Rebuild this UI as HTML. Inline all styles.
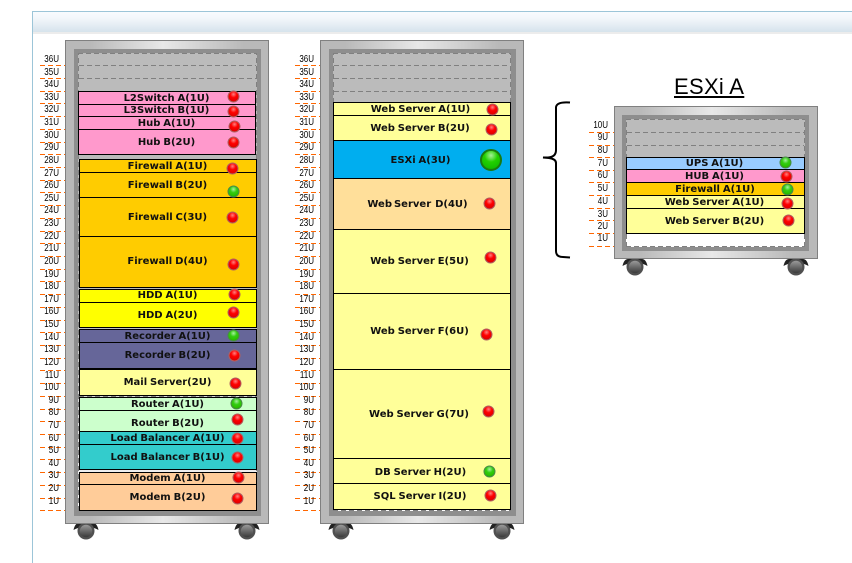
<!DOCTYPE html>
<html><head><meta charset="utf-8"><style>
html,body{margin:0;padding:0;background:#fff;width:852px;height:563px;overflow:hidden}
div,span{position:absolute;box-sizing:border-box}
#h{left:32px;top:11px;width:820px;height:21px;border-top:1px solid #9cc5d8;background:linear-gradient(#f8fbfe,#f3f7fb 30%,#d6e3ec)}
#hl{left:33px;top:32px;width:819px;height:2px;background:#ececec}
#v{left:32px;top:11px;width:1px;height:552px;background:#9cc5d8}
.rk{border:1px solid #808080;background:linear-gradient(90deg,#b9b9b9,#b9b9b9 12%,#e8e8e8 48%,#b9b9b9 88%,#b9b9b9)}
.in{background:#8e8e8e}
.ds{background:
repeating-linear-gradient(90deg,#808080 0 5px,transparent 5px 8px) 0 0/100% 1px no-repeat,
repeating-linear-gradient(90deg,#808080 0 5px,transparent 5px 8px) 0 100%/100% 1px no-repeat,
repeating-linear-gradient(0deg,#808080 0 5px,transparent 5px 8px) 0 0/1px 100% no-repeat,
repeating-linear-gradient(0deg,#808080 0 5px,transparent 5px 8px) 100% 0/1px 100% no-repeat,
linear-gradient(#bbb,#bbb 55%,#e8e8e8 88%,#fff)}
.s3{background:
repeating-linear-gradient(90deg,#808080 0 5px,transparent 5px 8px) 0 0/100% 1px no-repeat,
repeating-linear-gradient(90deg,#808080 0 5px,transparent 5px 8px) 0 100%/100% 1px no-repeat,
repeating-linear-gradient(0deg,#808080 0 5px,transparent 5px 8px) 0 0/1px 100% no-repeat,
repeating-linear-gradient(0deg,#808080 0 5px,transparent 5px 8px) 100% 0/1px 100% no-repeat,
linear-gradient(#bbb,#bbb 30%,#c4c4c4 65%,#fff 85%)}
.g{height:1px;background:repeating-linear-gradient(90deg,#808080 0 5px,transparent 5px 8px)}
.t{height:1px;width:25px;left:40px;background:repeating-linear-gradient(90deg,#f60 0 5px,transparent 5px 8px)}
.l{left:38px;width:21px;height:12px;margin-top:1px;font:10px/12px "Liberation Sans",sans-serif;color:#000;text-align:right;transform:scaleX(.8);transform-origin:100% 50%}
.b{border:1px solid #000}
.x{margin-top:2px;font:bold 10px/20px "DejaVu Sans",sans-serif;color:#111;text-align:center;white-space:pre;word-spacing:-.6px;height:12px}
.d{width:12px;height:12px;border-radius:50%;transform:translate(-.5px,-.5px)}
.r{background:radial-gradient(circle at 50% 28%,#ff8080 0,#f00 38%,#e60000 70%,#b00 100%);border:1px solid #b06060}
.n{background:radial-gradient(circle at 50% 28%,#a6f0a0 0,#33cc11 38%,#2bc000 70%,#1a8a00 100%);border:1px solid #4a8a4a}
.p{background:#f9c}.f{background:#fc0}.y{background:#ff0}.m{background:#669}.w{background:#ff9}.o{background:#cfc}.c{background:#3cc}.q{background:#fc9}
</style></head><body>
<div id="h"></div><div id="hl"></div><div id="v"></div>

<!-- wheels -->
<svg style="position:absolute;left:0;top:0" width="852" height="563">
<defs><linearGradient id="wg" x1="0" y1="0" x2="0" y2="1"><stop offset="0" stop-color="#9a9a9a"/><stop offset="1" stop-color="#3a3a3a"/></linearGradient>
<g id="wh"><path d="M-12.500 -1 Q-11 -8 -7 -8 L7 -8 Q11 -8 12.500 -1 Q8 -4 0 -4 Q-8 -4 -12.500 -1Z" fill="#222"/><circle r="8.500" fill="#505050"/><circle r="6.200" fill="url(#wg)"/></g></defs>
<use href="#wh" x="86" y="531"/><use href="#wh" x="247" y="531"/>
<use href="#wh" x="341" y="531"/><use href="#wh" x="502" y="531"/>
<use href="#wh" x="635" y="267"/><use href="#wh" x="796" y="267"/>
<path d="M570 102.500 Q557 101.500 556 107 L556 150 Q556 157 548 157.500 L543 157.500 L549 158 Q556 159 556 163 L556 251 Q556 257 563 257 L570 257.500" fill="none" stroke="#000" stroke-width="2"/>
</svg>

<!-- rack 1 -->
<div class="rk" style="left:65px;top:40px;width:204px;height:484px"></div>
<div class="in" style="left:74px;top:49px;width:187px;height:467px"></div>
<div class="ds" style="left:78px;top:53px;width:179px;height:458px"></div>
<div class="g" style="left:79px;top:65px;width:177px"></div><div class="g" style="left:79px;top:78px;width:177px"></div><div class="g" style="left:79px;top:396px;width:177px"></div>
<div class="b p" style="left:78px;top:91px;width:178px;height:14px"></div>
<div class="b p" style="left:78px;top:104px;width:178px;height:13px"></div>
<div class="b p" style="left:78px;top:116px;width:178px;height:14px"></div>
<div class="b p" style="left:78px;top:129px;width:178px;height:26px"></div>
<div class="b f" style="left:79px;top:159px;width:178px;height:14px"></div>
<div class="b f" style="left:79px;top:172px;width:178px;height:26px"></div>
<div class="b f" style="left:79px;top:197px;width:178px;height:40px"></div>
<div class="b f" style="left:79px;top:236px;width:178px;height:52px"></div>
<div class="b y" style="left:79px;top:289px;width:178px;height:14px"></div>
<div class="b y" style="left:79px;top:302px;width:178px;height:26px"></div>
<div class="b m" style="left:79px;top:329px;width:178px;height:14px"></div>
<div class="b m" style="left:79px;top:342px;width:178px;height:27px"></div>
<div class="b w" style="left:79px;top:369px;width:178px;height:27px"></div>
<div class="b o" style="left:79px;top:397px;width:178px;height:14px"></div>
<div class="b o" style="left:79px;top:410px;width:178px;height:22px"></div>
<div class="b c" style="left:79px;top:431px;width:178px;height:14px"></div>
<div class="b c" style="left:79px;top:444px;width:178px;height:26px"></div>
<div class="b q" style="left:79px;top:472px;width:178px;height:13px"></div>
<div class="b q" style="left:79px;top:484px;width:178px;height:27px"></div>

<div class="x" style="left:78px;width:177px;top:87px">L2Switch A(1U)</div>
<div class="x" style="left:78px;width:177px;top:99px">L3Switch B(1U)</div>
<div class="x" style="left:78px;width:177px;top:112px">Hub A(1U)</div>
<div class="x" style="left:78px;width:177px;top:131px">Hub B(2U)</div>
<div class="x" style="left:79px;width:177px;top:155px">Firewall A(1U)</div>
<div class="x" style="left:79px;width:177px;top:174px">Firewall B(2U)</div>
<div class="x" style="left:79px;width:177px;top:206px">Firewall C(3U)</div>
<div class="x" style="left:79px;width:177px;top:250px">Firewall D(4U)</div>
<div class="x" style="left:79px;width:177px;top:284px">HDD A(1U)</div>
<div class="x" style="left:79px;width:177px;top:304px">HDD A(2U)</div>
<div class="x" style="left:79px;width:177px;top:325px">Recorder A(1U)</div>
<div class="x" style="left:79px;width:177px;top:344px">Recorder B(2U)</div>
<div class="x" style="left:79px;width:177px;top:371px">Mail Server(2U)</div>
<div class="x" style="left:79px;width:177px;top:393px">Router A(1U)</div>
<div class="x" style="left:79px;width:177px;top:412px">Router B(2U)</div>
<div class="x" style="left:79px;width:177px;top:427px">Load Balancer A(1U)</div>
<div class="x" style="left:79px;width:177px;top:446px">Load Balancer B(1U)</div>
<div class="x" style="left:79px;width:177px;top:467px">Modem A(1U)</div>
<div class="x" style="left:79px;width:177px;top:486px">Modem B(2U)</div>

<div class="d r" style="left:228px;top:91px"></div>
<div class="d r" style="left:228px;top:106px"></div>
<div class="d r" style="left:229px;top:121px"></div>
<div class="d r" style="left:228px;top:137px"></div>
<div class="d r" style="left:227px;top:163px"></div>
<div class="d n" style="left:228px;top:186px"></div>
<div class="d r" style="left:227px;top:212px"></div>
<div class="d r" style="left:228px;top:259px"></div>
<div class="d r" style="left:229px;top:289px"></div>
<div class="d r" style="left:228px;top:307px"></div>
<div class="d n" style="left:228px;top:330px"></div>
<div class="d r" style="left:229px;top:350px"></div>
<div class="d r" style="left:230px;top:378px"></div>
<div class="d n" style="left:231px;top:398px"></div>
<div class="d r" style="left:232px;top:414px"></div>
<div class="d r" style="left:232px;top:433px"></div>
<div class="d r" style="left:232px;top:452px"></div>
<div class="d r" style="left:233px;top:472px"></div>
<div class="d r" style="left:232px;top:493px"></div>

<!-- rack 2 -->
<div class="rk" style="left:320px;top:40px;width:204px;height:484px"></div>
<div class="in" style="left:329px;top:49px;width:187px;height:467px"></div>
<div class="ds" style="left:333px;top:53px;width:178px;height:458px"></div>
<div class="g" style="left:334px;top:65px;width:176px"></div><div class="g" style="left:334px;top:78px;width:176px"></div><div class="g" style="left:334px;top:91px;width:176px"></div>
<div class="b w" style="left:333px;top:102px;width:178px;height:14px"></div>
<div class="b w" style="left:333px;top:115px;width:178px;height:26px"></div>
<div class="b" style="left:333px;top:140px;width:178px;height:39px;background:#00aeef"></div>
<div class="b" style="left:333px;top:178px;width:178px;height:52px;background:#ffdf9a"></div>
<div class="b w" style="left:333px;top:229px;width:178px;height:65px"></div>
<div class="b w" style="left:333px;top:293px;width:178px;height:77px"></div>
<div class="b w" style="left:333px;top:369px;width:178px;height:90px"></div>
<div class="b w" style="left:333px;top:458px;width:178px;height:26px"></div>
<div class="b w" style="left:333px;top:483px;width:178px;height:27px"></div>

<div class="x" style="left:333px;width:175px;top:98px">Web Server A(1U)</div>
<div class="x" style="left:333px;width:174px;top:117px">Web Server B(2U)</div>
<div class="x" style="left:333px;width:175px;top:149px">ESXi A(3U)</div>
<div class="x" style="left:333px;width:169px;top:193px;word-spacing:-1.5px">Web Server  D(4U)</div>
<div class="x" style="left:333px;width:173px;top:250px">Web Server E(5U)</div>
<div class="x" style="left:333px;width:173px;top:320px">Web Server F(6U)</div>
<div class="x" style="left:333px;width:172px;top:403px">Web Server G(7U)</div>
<div class="x" style="left:333px;width:175px;top:461px">DB Server H(2U)</div>
<div class="x" style="left:333px;width:174px;top:485px">SQL Server I(2U)</div>

<div class="d r" style="left:487px;top:104px"></div>
<div class="d r" style="left:486px;top:124px"></div>
<div class="d n" style="left:480px;top:149px;width:22px;height:22px;border:2px solid #1a7a10;transform:none;background:radial-gradient(circle at 50% 25%,#a8f098 0,#22d000 40%,#14c000 75%,#109000 100%)"></div>
<div class="d r" style="left:484px;top:198px"></div>
<div class="d r" style="left:485px;top:252px"></div>
<div class="d r" style="left:481px;top:329px"></div>
<div class="d r" style="left:483px;top:406px"></div>
<div class="d n" style="left:484px;top:466px"></div>
<div class="d r" style="left:485px;top:490px"></div>

<!-- rack 3 -->
<div style="left:674px;top:74px;width:74px;font:22px/25px 'Liberation Sans',sans-serif;letter-spacing:.3px;color:#000;text-decoration:underline;white-space:pre">ESXi A</div>
<div class="rk" style="left:614px;top:106px;width:204px;height:153px"></div>
<div class="in" style="left:622px;top:115px;width:187px;height:136px"></div>
<div class="s3" style="left:626px;top:119px;width:179px;height:128px"></div>
<div class="g" style="left:627px;top:132px;width:177px"></div><div class="g" style="left:627px;top:145px;width:177px"></div>
<div class="b" style="left:626px;top:157px;width:179px;height:13px;background:#9cf"></div>
<div class="b p" style="left:626px;top:169px;width:179px;height:14px"></div>
<div class="b f" style="left:626px;top:182px;width:179px;height:14px"></div>
<div class="b w" style="left:626px;top:195px;width:179px;height:14px"></div>
<div class="b w" style="left:626px;top:208px;width:179px;height:26px"></div>
<div class="x" style="left:626px;width:177px;top:152px">UPS A(1U)</div>
<div class="x" style="left:626px;width:177px;top:165px">HUB A(1U)</div>
<div class="x" style="left:626px;width:178px;top:178px">Firewall A(1U)</div>
<div class="x" style="left:626px;width:177px;top:191px">Web Server A(1U)</div>
<div class="x" style="left:626px;width:177px;top:210px">Web Server B(2U)</div>
<div class="d n" style="left:780px;top:157px"></div>
<div class="d r" style="left:781px;top:171px"></div>
<div class="d n" style="left:782px;top:184px"></div>
<div class="d r" style="left:782px;top:198px"></div>
<div class="d r" style="left:783px;top:215px"></div>

<!-- ruler 1 -->
<div class="t" style="top:65px"></div><div class="t" style="top:78px"></div><div class="t" style="top:91px"></div><div class="t" style="top:103px"></div><div class="t" style="top:116px"></div><div class="t" style="top:129px"></div><div class="t" style="top:142px"></div><div class="t" style="top:154px"></div><div class="t" style="top:167px"></div><div class="t" style="top:180px"></div><div class="t" style="top:192px"></div><div class="t" style="top:205px"></div><div class="t" style="top:218px"></div><div class="t" style="top:231px"></div><div class="t" style="top:243px"></div><div class="t" style="top:256px"></div><div class="t" style="top:269px"></div><div class="t" style="top:281px"></div><div class="t" style="top:294px"></div><div class="t" style="top:307px"></div><div class="t" style="top:320px"></div><div class="t" style="top:332px"></div><div class="t" style="top:345px"></div><div class="t" style="top:358px"></div><div class="t" style="top:370px"></div><div class="t" style="top:383px"></div><div class="t" style="top:396px"></div><div class="t" style="top:409px"></div><div class="t" style="top:421px"></div><div class="t" style="top:434px"></div><div class="t" style="top:447px"></div><div class="t" style="top:459px"></div><div class="t" style="top:472px"></div><div class="t" style="top:485px"></div><div class="t" style="top:498px"></div><div class="t" style="top:510px"></div>
<div class="l" style="top:53px">36U</div><div class="l" style="top:66px">35U</div><div class="l" style="top:78px">34U</div><div class="l" style="top:91px">33U</div><div class="l" style="top:103px">32U</div><div class="l" style="top:116px">31U</div><div class="l" style="top:129px">30U</div><div class="l" style="top:141px">29U</div><div class="l" style="top:154px">28U</div><div class="l" style="top:167px">27U</div><div class="l" style="top:179px">26U</div><div class="l" style="top:192px">25U</div><div class="l" style="top:204px">24U</div><div class="l" style="top:217px">23U</div><div class="l" style="top:230px">22U</div><div class="l" style="top:242px">21U</div><div class="l" style="top:255px">20U</div><div class="l" style="top:268px">19U</div><div class="l" style="top:280px">18U</div><div class="l" style="top:293px">17U</div><div class="l" style="top:305px">16U</div><div class="l" style="top:318px">15U</div><div class="l" style="top:331px">14U</div><div class="l" style="top:343px">13U</div><div class="l" style="top:356px">12U</div><div class="l" style="top:369px">11U</div><div class="l" style="top:381px">10U</div><div class="l" style="top:394px">9U</div><div class="l" style="top:406px">8U</div><div class="l" style="top:419px">7U</div><div class="l" style="top:432px">6U</div><div class="l" style="top:444px">5U</div><div class="l" style="top:457px">4U</div><div class="l" style="top:469px">3U</div><div class="l" style="top:482px">2U</div><div class="l" style="top:495px">1U</div>

<!-- ruler 2 -->
<div style="left:255px;top:0;width:0;height:0">
<div class="t" style="top:65px"></div><div class="t" style="top:78px"></div><div class="t" style="top:91px"></div><div class="t" style="top:103px"></div><div class="t" style="top:116px"></div><div class="t" style="top:129px"></div><div class="t" style="top:142px"></div><div class="t" style="top:154px"></div><div class="t" style="top:167px"></div><div class="t" style="top:180px"></div><div class="t" style="top:192px"></div><div class="t" style="top:205px"></div><div class="t" style="top:218px"></div><div class="t" style="top:231px"></div><div class="t" style="top:243px"></div><div class="t" style="top:256px"></div><div class="t" style="top:269px"></div><div class="t" style="top:281px"></div><div class="t" style="top:294px"></div><div class="t" style="top:307px"></div><div class="t" style="top:320px"></div><div class="t" style="top:332px"></div><div class="t" style="top:345px"></div><div class="t" style="top:358px"></div><div class="t" style="top:370px"></div><div class="t" style="top:383px"></div><div class="t" style="top:396px"></div><div class="t" style="top:409px"></div><div class="t" style="top:421px"></div><div class="t" style="top:434px"></div><div class="t" style="top:447px"></div><div class="t" style="top:459px"></div><div class="t" style="top:472px"></div><div class="t" style="top:485px"></div><div class="t" style="top:498px"></div><div class="t" style="top:510px"></div>
<div class="l" style="top:53px">36U</div><div class="l" style="top:66px">35U</div><div class="l" style="top:78px">34U</div><div class="l" style="top:91px">33U</div><div class="l" style="top:103px">32U</div><div class="l" style="top:116px">31U</div><div class="l" style="top:129px">30U</div><div class="l" style="top:141px">29U</div><div class="l" style="top:154px">28U</div><div class="l" style="top:167px">27U</div><div class="l" style="top:179px">26U</div><div class="l" style="top:192px">25U</div><div class="l" style="top:204px">24U</div><div class="l" style="top:217px">23U</div><div class="l" style="top:230px">22U</div><div class="l" style="top:242px">21U</div><div class="l" style="top:255px">20U</div><div class="l" style="top:268px">19U</div><div class="l" style="top:280px">18U</div><div class="l" style="top:293px">17U</div><div class="l" style="top:305px">16U</div><div class="l" style="top:318px">15U</div><div class="l" style="top:331px">14U</div><div class="l" style="top:343px">13U</div><div class="l" style="top:356px">12U</div><div class="l" style="top:369px">11U</div><div class="l" style="top:381px">10U</div><div class="l" style="top:394px">9U</div><div class="l" style="top:406px">8U</div><div class="l" style="top:419px">7U</div><div class="l" style="top:432px">6U</div><div class="l" style="top:444px">5U</div><div class="l" style="top:457px">4U</div><div class="l" style="top:469px">3U</div><div class="l" style="top:482px">2U</div><div class="l" style="top:495px">1U</div>
</div>

<!-- ruler 3 -->
<div style="left:549px;top:0;width:0;height:0">
<div class="t" style="top:132px"></div><div class="t" style="top:145px"></div><div class="t" style="top:157px"></div><div class="t" style="top:170px"></div><div class="t" style="top:182px"></div><div class="t" style="top:195px"></div><div class="t" style="top:208px"></div><div class="t" style="top:220px"></div><div class="t" style="top:233px"></div><div class="t" style="top:246px"></div>
<div class="l" style="top:119px">10U</div><div class="l" style="top:131px">9U</div><div class="l" style="top:144px">8U</div><div class="l" style="top:157px">7U</div><div class="l" style="top:169px">6U</div><div class="l" style="top:182px">5U</div><div class="l" style="top:195px">4U</div><div class="l" style="top:208px">3U</div><div class="l" style="top:220px">2U</div><div class="l" style="top:232px">1U</div>
</div>
</body></html>
